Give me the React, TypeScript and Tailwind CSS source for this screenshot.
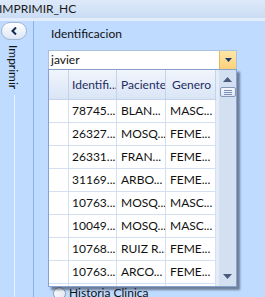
import React from "react";

const rows: [string, string, string][] = [
  ["78745...", "BLAN...", "MASC..."],
  ["26327...", "MOSQ...", "FEME..."],
  ["26331...", "FRAN...", "FEME..."],
  ["31169...", "ARBO...", "FEME..."],
  ["10763...", "MOSQ...", "MASC..."],
  ["10049...", "MOSQ...", "MASC..."],
  ["10768...", "RUIZ R...", "FEME..."],
  ["10763...", "ARCO...", "FEME..."],
];

export default function App() {
  return (
    <div
      className="relative w-[265px] h-[297px] overflow-hidden bg-[#bfdbff] flex flex-col text-[12px] text-[#111]"
      style={{ fontFamily: 'Lato, "Noto Sans", sans-serif' }}
    >
      {/* title bar */}
      <div className="h-[18px] shrink-0 bg-gradient-to-b from-[#dde9f9] to-[#cadcf4] flex items-center">
        <span className="-ml-[1px] leading-[14px] text-[#1a1a1a]">IMPRIMIR_HC</span>
      </div>
      <div className="h-[3px] shrink-0 bg-[#e2ecfa]" />

      {/* body */}
      <div className="flex-1 flex min-h-0">
        {/* left collapsed strip */}
        <div className="w-[34px] shrink-0 border-r border-[#8db2e3] flex flex-col items-start">
          <div className="mt-[1px] ml-[1px] w-[26px] h-[18px] rounded-full border border-[#9fb6d4] bg-gradient-to-b from-[#ffffff] to-[#dce7f5] flex items-center justify-center">
            <svg width="6" height="8" viewBox="0 0 6 8">
              <path d="M5 0.5 L1.5 4 L5 7.5" stroke="#15274a" strokeWidth="2" fill="none" />
            </svg>
          </div>
          <div className="mt-[5px] ml-[7px] [writing-mode:vertical-rl] leading-[12px] text-[#111]">Imprimir</div>
          <div className="mt-[6px] ml-[14px] w-[1px] flex-1 bg-[#e9f2fe]" />
        </div>

        {/* main panel */}
        <div className="flex-1 flex flex-col pl-[14px] pt-[5px]">
          <div className="ml-[3px] h-[16px] leading-[16px]">Identificacion</div>
          <div className="mt-[8px] w-[189px] h-[20px] flex border border-[#a9c2e2] bg-white">
            <div className="flex-1 pl-[2px] leading-[18px]">javier</div>
            <div className="w-[17px] h-full border-l border-[#e6b65e] bg-gradient-to-b from-[#fde7a6] to-[#fbd17a] flex items-center justify-center">
              <svg width="7" height="4" viewBox="0 0 7 4">
                <path d="M0 0 H7 L3.5 4 Z" fill="#1c3a70" />
              </svg>
            </div>
          </div>
          {/* hidden group edges behind popup */}
          <div className="mt-[92px] w-[202px] h-[1px] bg-[#eef5ff]" />
          <div className="mt-[98px] w-[202px] h-[1px] bg-[#eef5ff]" />
          <div className="mt-[26px] ml-[5px] flex items-center gap-[3px]">
            <div className="w-[13px] h-[13px] rounded-full border border-[#8d9bb0] bg-gradient-to-br from-[#ffffff] to-[#dfe5ee]" />
            <span className="leading-[14px]">Historia Clinica</span>
          </div>
        </div>
      </div>

      {/* dropdown popup */}
      <div className="absolute left-[48px] top-[69px] w-[189px] h-[218px] border border-[#87a3cb] bg-white flex shadow-[3px_3px_2px_rgba(40,50,70,0.55)]">
        <div className="w-[167px] flex flex-col">
          <div className="h-[30px] shrink-0 flex border-b border-[#c3d3ea] bg-gradient-to-b from-[#f1f5fc] to-[#d9e5f6] text-[#1f2c63]">
            <div className="w-[20px] border-r border-[#c3d3ea]" />
            <div className="w-[48px] border-r border-[#c3d3ea] pl-[3px] leading-[29px] whitespace-nowrap overflow-hidden">Identifi...</div>
            <div className="w-[49px] border-r border-[#c3d3ea] pl-[4px] leading-[29px] whitespace-nowrap overflow-hidden">Paciente</div>
            <div className="w-[50px] border-r border-[#c3d3ea] pl-[6px] leading-[29px] whitespace-nowrap overflow-hidden">Genero</div>
          </div>
          {rows.map((r, i) => (
            <div key={i} className="h-[23px] shrink-0 flex border-b border-[#d4e0f1]">
              <div className="w-[20px] border-r border-[#d4e0f1]" />
              <div className="w-[48px] border-r border-[#d4e0f1] pl-[3px] leading-[22px] whitespace-nowrap overflow-hidden">{r[0]}</div>
              <div className="w-[49px] border-r border-[#d4e0f1] pl-[4px] leading-[22px] whitespace-nowrap overflow-hidden">{r[1]}</div>
              <div className="w-[50px] border-r border-[#d4e0f1] pl-[4px] leading-[22px] whitespace-nowrap overflow-hidden">{r[2]}</div>
            </div>
          ))}
          <div className="flex-1 flex">
            <div className="w-[20px] border-r border-[#d4e0f1]" />
            <div className="w-[48px] border-r border-[#d4e0f1]" />
            <div className="w-[49px] border-r border-[#d4e0f1]" />
            <div className="w-[50px] border-r border-[#d4e0f1]" />
          </div>
        </div>
        <div className="w-[3px] bg-[#e4ecf7]" />
        <div className="w-[17px] bg-[#d3e0f1] flex flex-col items-center">
          <svg className="mt-[7px]" width="9" height="5" viewBox="0 0 9 5">
            <path d="M0 5 H9 L4.5 0 Z" fill="#4a5b7c" />
          </svg>
          <div className="mt-[5px] w-[16px] h-[10px] rounded-[2px] border border-[#8497b8] bg-gradient-to-b from-[#f4f8fd] to-[#dbe6f4] flex flex-col items-center justify-center gap-[1px]">
            <div className="w-[8px] h-[1px] bg-[#7d8fae]" />
            <div className="w-[8px] h-[1px] bg-[#7d8fae]" />
            <div className="w-[8px] h-[1px] bg-[#7d8fae]" />
          </div>
          <div className="flex-1" />
          <svg className="mb-[7px]" width="9" height="5" viewBox="0 0 9 5">
            <path d="M0 0 H9 L4.5 5 Z" fill="#4a5b7c" />
          </svg>
        </div>
      </div>
    </div>
  );
}
